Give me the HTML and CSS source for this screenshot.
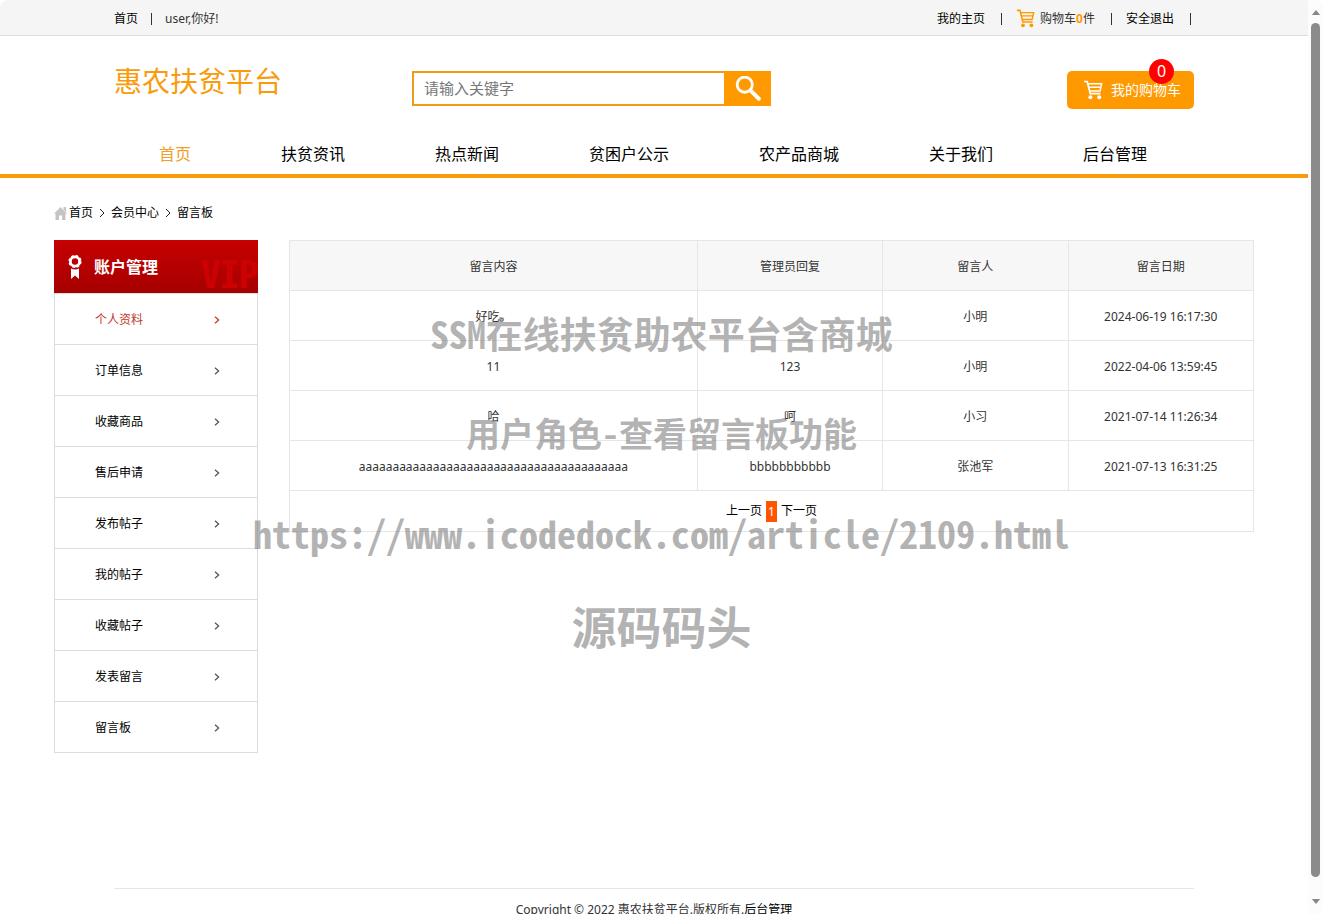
FILE: index.html
```html
<!DOCTYPE html>
<html lang="zh-CN">
<head>
<meta charset="utf-8">
<title>惠农扶贫平台 - 留言板</title>
<link rel="stylesheet" href="styles.css">
</head>
<body>
<svg class="defs" aria-hidden="true">
  <symbol id="cart" viewBox="0 0 20 20">
    <path d="M1 1.5h3.2l3 12.2h10.3" fill="none" stroke="currentColor" stroke-width="1.7"/>
    <path d="M5 3.8h13.6l-1.6 7.2H6.8M5.8 7.2h12" fill="none" stroke="currentColor" stroke-width="1.5"/>
    <circle cx="7.4" cy="17.2" r="2" fill="currentColor"/><circle cx="16.2" cy="17.2" r="2" fill="currentColor"/>
  </symbol>
  <symbol id="arrow" viewBox="0 0 6 8">
    <path d="M1 .8 4.6 4 1 7.2" fill="none" stroke="currentColor" stroke-width="1.3"/>
  </symbol>
  <symbol id="thin-arrow" viewBox="0 0 6 10">
    <path d="M1 1 5 5 1 9" fill="none" stroke="currentColor"/>
  </symbol>
</svg>
<div class="window">
  <div class="page">
    <div class="topbar">
      <div class="inner topbar-inner">
        <a href="#">首页</a><span class="divider"></span><span>user,你好!</span>
        <div class="topbar-right">
          <a href="#">我的主页</a><span class="bar"></span>
          <svg class="cart-small"><use href="#cart"/></svg><span>购物车<b>0</b>件</span><span class="bar"></span>
          <a href="#">安全退出</a><span class="bar"></span>
        </div>
      </div>
    </div>

    <header class="header">
      <div class="inner">
        <div class="brand-row">
          <a class="logo" href="#">惠农扶贫平台</a>
          <form class="search">
            <input type="text" aria-label="关键字" placeholder="请输入关键字">
            <button type="button" aria-label="搜索">
              <svg viewBox="0 0 24 24"><circle cx="9" cy="8" r="7" fill="none" stroke="currentColor" stroke-width="2.6"/><path d="m14.5 13.5 7.5 7.5" stroke="currentColor" stroke-width="3.6" stroke-linecap="round"/></svg>
            </button>
          </form>
          <a class="cart-button" href="#"><svg><use href="#cart"/></svg>我的购物车<span class="badge">0</span></a>
        </div>
        <nav class="nav">
          <a class="active" href="#">首页</a><a href="#">扶贫资讯</a><a href="#">热点新闻</a><a href="#">贫困户公示</a><a href="#">农产品商城</a><a href="#">关于我们</a><a href="#">后台管理</a>
        </nav>
      </div>
    </header>

    <div class="content">
      <div class="crumbs">
        <svg class="home" viewBox="0 0 13 13"><path d="M6.5 0 13 6.8h-1.5V13H8V8.5H5V13H1.5V6.8H0zM9.5 0H12v5L9.5 2.6z" fill="currentColor"/></svg>
        <a href="#">首页</a><svg class="sep"><use href="#thin-arrow"/></svg><a href="#">会员中心</a><svg class="sep"><use href="#thin-arrow"/></svg><a href="#">留言板</a>
      </div>

      <div class="columns">
        <aside class="sidebar">
          <h2>
            <svg class="medal" viewBox="0 0 14 24"><circle cx="7" cy="6.5" r="4.6" fill="none" stroke="currentColor" stroke-width="2.8"/><circle cx="7" cy="6.5" r="5.8" fill="none" stroke="currentColor" stroke-width="1.6" stroke-dasharray="2.6 1.95"/><path d="M3 13.5q4 2 8 0V24l-4-3.6L3 24z" fill="currentColor"/></svg>
            账户管理
            <span class="vip">VIP</span>
          </h2>
          <ul>
            <li><a class="active" href="#">个人资料<svg><use href="#arrow"/></svg></a></li>
            <li><a href="#">订单信息<svg><use href="#arrow"/></svg></a></li>
            <li><a href="#">收藏商品<svg><use href="#arrow"/></svg></a></li>
            <li><a href="#">售后申请<svg><use href="#arrow"/></svg></a></li>
            <li><a href="#">发布帖子<svg><use href="#arrow"/></svg></a></li>
            <li><a href="#">我的帖子<svg><use href="#arrow"/></svg></a></li>
            <li><a href="#">收藏帖子<svg><use href="#arrow"/></svg></a></li>
            <li><a href="#">发表留言<svg><use href="#arrow"/></svg></a></li>
            <li><a href="#">留言板<svg><use href="#arrow"/></svg></a></li>
          </ul>
        </aside>

        <table class="messages">
          <thead>
            <tr><th class="wide">留言内容</th><th>管理员回复</th><th>留言人</th><th>留言日期</th></tr>
          </thead>
          <tbody>
            <tr><td>好吃。</td><td></td><td>小明</td><td>2024-06-19 16:17:30</td></tr>
            <tr><td>11</td><td>123</td><td>小明</td><td>2022-04-06 13:59:45</td></tr>
            <tr><td>哈</td><td>呵</td><td>小习</td><td>2021-07-14 11:26:34</td></tr>
            <tr><td>aaaaaaaaaaaaaaaaaaaaaaaaaaaaaaaaaaaaaaaa</td><td>bbbbbbbbbbb</td><td>张池军</td><td>2021-07-13 16:31:25</td></tr>
          </tbody>
          <tfoot>
            <tr><td colspan="4"><div class="pager"><a href="#">上一页</a><span class="current">1</span><a href="#">下一页</a></div></td></tr>
          </tfoot>
        </table>
      </div>
    </div>

    <footer class="inner footer">Copyright © 2022 惠农扶贫平台.版权所有.<a href="#">后台管理</a></footer>
  </div>

  <div class="scrollbar" aria-hidden="true">
    <svg viewBox="0 0 10 6"><path d="M5 0 10 6H0z" fill="currentColor"/></svg>
    <div class="thumb"></div>
    <svg class="down" viewBox="0 0 10 6"><path d="M0 0h10L5 6z" fill="currentColor"/></svg>
  </div>

  <div class="watermark">
    <p class="wm-title">SSM在线扶贫助农平台含商城</p>
    <p class="wm-sub">用户角色-查看留言板功能</p>
    <p class="wm-url">https://www.icodedock.com/article/2109.html</p>
    <p class="wm-brand">源码码头</p>
  </div>
</div>
</body>
</html>
```
FILE: styles.css
```css
* { box-sizing: border-box; }

body {
  margin: 0;
  background: #fff;
  color: #333;
  font: 12px/20px "Noto Sans", "Noto Sans CJK SC", sans-serif;
}

a { color: #000; text-decoration: none; }
h2, ul, p { margin: 0; padding: 0; }
ul { list-style: none; }
svg { display: block; flex: none; }
.defs { position: absolute; width: 0; height: 0; }

.window {
  position: relative;
  display: flex;
  height: 100vh;
  overflow: hidden;
  border-radius: 8px;
}

.page { flex: 1; min-width: 0; }

.inner { max-width: 1080px; margin: 0 auto; }

/* Top bar */
.topbar { background: #f5f5f5; border-bottom: 1px solid #ddd; }
.topbar-inner { display: flex; align-items: center; height: 35px; padding-top: 2px; }
.divider { width: 1px; height: 12px; margin: 0 13px; background: #333; }
.topbar-right { display: flex; align-items: center; margin-left: auto; padding-right: 3px; }
.bar { width: 1px; height: 12px; margin: 0 14px 0 16px; background: #333; }
.bar:last-child { margin-right: 0; }
.cart-small { width: 19px; height: 19px; margin-right: 5px; color: #f90; }
.topbar b { color: #f90; }

/* Header */
.header { padding-top: 35px; border-bottom: 4px solid #f99b0a; }
.brand-row { display: flex; align-items: flex-start; }
.logo { color: #f99b0a; font-size: 28px; line-height: 20px; }
.search { display: flex; width: 359px; height: 35px; margin-left: 130px; }
.search input {
  flex: 1;
  min-width: 0;
  padding: 0 10px 2px;
  border: 2px solid #f09a1a;
  border-right: 0;
  outline: 0;
  font: inherit;
  font-size: 15px;
}
.search input::placeholder { color: #777; }
.search button {
  display: flex;
  align-items: center;
  justify-content: center;
  width: 47px;
  padding: 0;
  border: 0;
  background: #f90;
  color: #fff;
}
.search button svg { width: 26px; height: 26px; }

.cart-button {
  position: relative;
  display: flex;
  align-items: center;
  gap: 8px;
  height: 38px;
  margin-left: auto;
  padding: 0 13px 0 16px;
  border-radius: 5px;
  background: #f90;
  color: #fff;
  font-size: 14px;
}
.cart-button svg { width: 20px; height: 20px; }
.badge {
  position: absolute;
  top: -12px;
  right: 20px;
  width: 25px;
  height: 25px;
  border-radius: 50%;
  background: #f00;
  font-size: 16px;
  line-height: 25px;
  text-align: center;
}

.nav { display: flex; margin-top: 25px; font-size: 16px; line-height: 40px; }
.nav a { padding: 0 45px; white-space: nowrap; }
.nav .active { color: #f0a02a; }

/* Content */
.content { max-width: 1200px; margin: 0 auto; padding-top: 25px; }
.crumbs { display: flex; align-items: center; height: 20px; margin-bottom: 17px; }
.home { width: 13px; height: 13px; margin-right: 2px; color: #c4c4c4; }
.sep { width: 6px; height: 10px; margin: 0 6px; color: #222; }

.columns { display: flex; align-items: flex-start; gap: 31px; }

.sidebar { flex: none; width: 204px; }
.sidebar h2 {
  position: relative;
  display: flex;
  align-items: center;
  gap: 12px;
  height: 53px;
  padding-left: 14px;
  overflow: hidden;
  background: linear-gradient(#c60000, #a60000);
  color: #fff;
  font-size: 16px;
}
.medal { width: 14px; height: 24px; }
.vip {
  position: absolute;
  right: 0;
  bottom: -9px;
  color: #cc0202;
  font-family: "Noto Sans Mono CJK SC", "Noto Sans CJK SC", sans-serif;
  font-size: 38px;
  line-height: 60px;
}
.sidebar ul { border: 1px solid #ddd; border-bottom: 0; }
.sidebar li { border-bottom: 1px solid #ddd; }
.sidebar li a {
  display: flex;
  align-items: center;
  justify-content: space-between;
  height: 50px;
  padding: 2px 37px 0 40px;
}
.sidebar li svg { width: 6px; height: 8px; color: #555; }
.sidebar .active, .sidebar .active svg { color: #c0392b; }

.messages { flex: 1; width: 100%; border-collapse: collapse; table-layout: fixed; }
.messages th, .messages td {
  height: 50px;
  padding: 2px 0 0;
  border: 1px solid #e6e6e6;
  font-weight: normal;
  text-align: center;
}
.messages th { background: #f7f7f7; }
.messages .wide { width: 42.3%; }
.messages tfoot td { height: 41px; padding: 0; }
.pager { display: flex; align-items: center; justify-content: center; gap: 4px; }
.current { padding: 0 2px; background: #f50; color: #fff; line-height: 21px; }

.footer {
  margin-top: 135px;
  padding-top: 11px;
  border-top: 1px solid #e6e6e6;
  text-align: center;
}

/* Scroll track */
.scrollbar {
  display: flex;
  flex-direction: column;
  align-items: center;
  gap: 8px;
  width: 15px;
  padding: 10px 0;
  background: #fcfcfc;
  color: #888;
}
.scrollbar svg { width: 10px; height: 5px; }
.thumb { flex: 1; width: 9px; margin-bottom: 14px; border-radius: 5px; background: #8b8b8b; }

/* Watermark laid over the page */
.watermark {
  position: absolute;
  inset: 0;
  padding-top: 283px;
  color: rgba(127, 127, 127, .6);
  font-family: "Noto Sans Mono CJK SC", "Noto Sans CJK SC", sans-serif;
  font-weight: bold;
  line-height: 100px;
  text-align: center;
  white-space: nowrap;
  pointer-events: none;
}
.wm-title { font-size: 37px; }
.wm-sub { font-size: 34px; }
.wm-url { font-size: 38px; }
.wm-brand { font-size: 45px; line-height: 86px; }
```
